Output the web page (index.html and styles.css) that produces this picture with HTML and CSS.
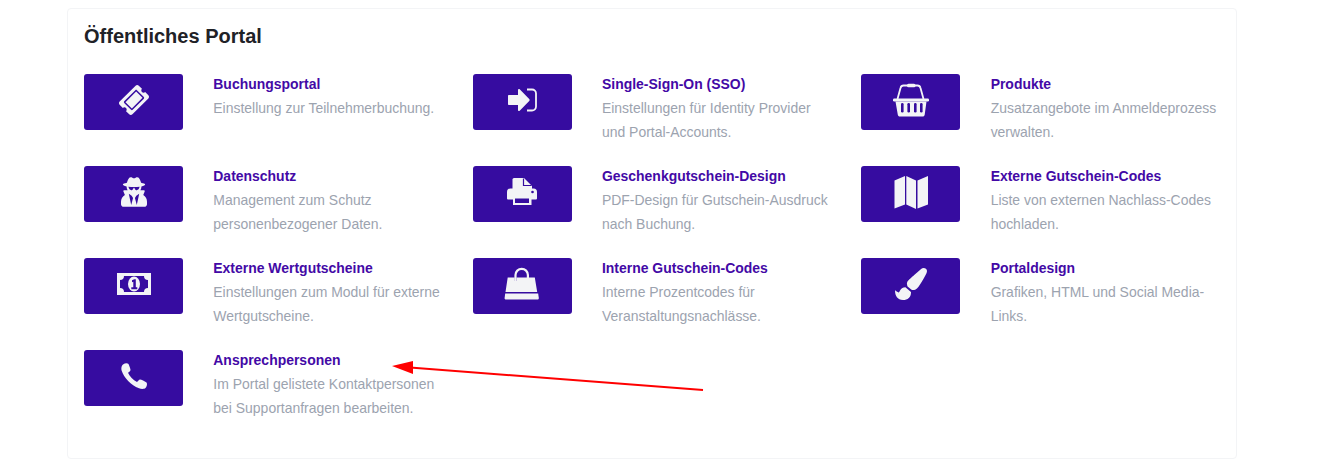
FILE: index.html
```html
<!DOCTYPE html>
<html lang="de">
<head>
    <meta charset="utf-8" />
    <meta name="viewport" content="width=device-width, initial-scale=1" />
    <title>Öffentliches Portal</title>
    <link rel="stylesheet" href="styles.css">
</head>
<body>
    <div class="page">
        <section class="portal-card">
            <h2 class="portal-title">Öffentliches Portal</h2>

            <div class="tile-grid">
                <a class="tile">
                    <div class="tile-icon">
                        <svg width="40" height="40" viewBox="0 0 40 40"><g transform="translate(20 20) rotate(-45) scale(0.047) translate(-288 -256)"><path d="M128 160h320v192H128V160zm400 96c0 26.51 21.49 48 48 48v96c0 26.51-21.49 48-48 48H48c-26.51 0-48-21.49-48-48v-96c26.51 0 48-21.49 48-48s-21.49-48-48-48v-96c0-26.51 21.49-48 48-48h480c26.51 0 48 21.49 48 48v96c-26.51 0-48 21.49-48 48zm-48-104c0-13.255-10.745-24-24-24H120c-13.255 0-24 10.745-24 24v208c0 13.255 10.745 24 24 24h336c13.255 0 24-10.745 24-24V152z"/></g></svg>
                    </div>
                    <div class="tile-text">
                        <h3>Buchungsportal</h3>
                        <p>Einstellung zur Teilnehmerbuchung.</p>
                    </div>
                </a>

                <a class="tile">
                    <div class="tile-icon">
                        <svg width="40" height="40" viewBox="0 0 40 40"><path d="M7 15h9V10c0-1 1-1.400 1.700-.8L27.200 19c.6.6.6 1.400 0 2l-9.500 9.800c-.7.600-1.700.2-1.700-.8v-5H7c-.6 0-1-.4-1-1v-8c0-.6.4-1 1-1z"/><path class="line" d="M25 9.500h5a4 4 0 0 1 4 4v13a4 4 0 0 1-4 4h-5"/></svg>
                    </div>
                    <div class="tile-text">
                        <h3>Single-Sign-On (SSO)</h3>
                        <p>Einstellungen für Identity Provider und Portal-Accounts.</p>
                    </div>
                </a>

                <a class="tile">
                    <div class="tile-icon">
                        <svg width="40" height="40" viewBox="0 0 40 40"><path class="line" d="M6.500 19L9.500 8q.6-2.500 3-2.500h14q2.400 0 3 2.500l3 11"/><rect x="16" y="3.800" width="8.500" height="3.400" rx="1.500"/><rect x="2" y="18.500" width="36" height="3" rx="1.200"/><path d="M4.500 21.500h31l-1.800 13.200c-.2 1.200-1 1.800-2 1.800H8.800c-1 0-1.800-.6-2-1.800z"/><g class="slots"><rect x="10" y="23" width="2.600" height="9.500" rx="1.200"/><rect x="16.400" y="23" width="2.600" height="9.500" rx="1.200"/><rect x="23" y="23" width="2.600" height="9.500" rx="1.200"/><rect x="29" y="23" width="2.600" height="9.500" rx="1.200"/></g></svg>
                    </div>
                    <div class="tile-text">
                        <h3>Produkte</h3>
                        <p>Zusatzangebote im Anmeldeprozess verwalten.</p>
                    </div>
                </a>

                <a class="tile">
                    <div class="tile-icon">
                        <svg width="26" height="30" viewBox="0 0 448 512"><path d="M383.9 308.3l23.9-62.6c4-10.5-3.7-21.7-15-21.7h-58.5c11-18.9 17.8-40.6 17.8-64v-.3c39.2-7.8 64-19.1 64-31.7 0-13.3-27.3-25.1-70.1-33-9.2-32.8-27-65.8-40.6-82.8-9.5-11.9-25.9-15.6-39.5-8.8l-27.6 13.8c-9 4.5-19.6 4.5-28.6 0L182.1 3.4c-13.6-6.8-30-3.1-39.5 8.8-13.5 17-31.4 50-40.6 82.8-42.7 7.9-70 19.7-70 33 0 12.6 24.8 23.9 64 31.7v.3c0 23.4 6.8 45.1 17.8 64H56.3c-11.5 0-19.2 11.7-14.7 22.3l25.8 60.2C27.3 329.8 0 372.7 0 422.4v44.8C0 491.9 20.1 512 44.8 512h358.4c24.7 0 44.8-20.1 44.8-44.8v-44.8c0-48.4-25.8-90.4-64.1-114.1zM176 480l-41.6-192 49.6 32 24 40-32 120zm96 0l-32-120 24-40 49.6-32L272 480zm41.7-298.5c-3.9 11.9-7 24.6-16.5 33.4-10.1 9.3-48 22.4-64-25-2.8-8.4-15.4-8.4-18.3 0-17 50.2-56 32.4-64 25-9.5-8.8-12.7-21.5-16.5-33.4-.8-2.5-6.3-5.7-6.3-5.8v-10.8c28.3 3.6 61 5.8 96 5.8s67.7-2.1 96-5.8v10.8c-.1.1-5.6 3.2-6.4 5.8z"/></svg>
                    </div>
                    <div class="tile-text">
                        <h3>Datenschutz</h3>
                        <p>Management zum Schutz personenbezogener Daten.</p>
                    </div>
                </a>

                <a class="tile">
                    <div class="tile-icon">
                        <svg width="30" height="27" viewBox="0 0 30 27"><path d="M7 0h10l8 8v5H5.500V1.500Q5.500 0 7 0z"/><path class="fold" d="M16.500 .5V7.500H24.500"/><path d="M3.500 10.500h23q3.500 0 3.500 3.500v6.500q0 1-1 1h-4.500V27H6v-5.500H1q-1 0-1-1V14q0-3.500 3.500-3.500z"/><rect class="slots" x="8" y="20.500" width="14" height="4.500"/><circle class="slots" cx="25.500" cy="14" r="1.300"/></svg>
                    </div>
                    <div class="tile-text">
                        <h3>Geschenkgutschein-Design</h3>
                        <p>PDF-Design für Gutschein-Ausdruck nach Buchung.</p>
                    </div>
                </a>

                <a class="tile">
                    <div class="tile-icon">
                        <svg width="40" height="40" viewBox="0 0 40 40"><path d="M3.500 8.500L14 4v28.500L3.500 36.500z"/><path d="M15.300 4L25 8.500v28.500L15.300 32.500z"/><path d="M26.500 8.500L37 4v28.500L26.500 36.500z"/></svg>
                    </div>
                    <div class="tile-text">
                        <h3>Externe Gutschein-Codes</h3>
                        <p>Liste von externen Nachlass-Codes hochladen.</p>
                    </div>
                </a>

                <a class="tile">
                    <div class="tile-icon">
                        <svg width="34" height="22" viewBox="0 0 34 22"><path fill-rule="evenodd" d="M0 0h34v22H0zM7 3q0 4-4 4v8q4 0 4 4h20q0-4 4-4V7q-4 0-4-4z"/><ellipse cx="17" cy="11" rx="6" ry="7.500"/><path class="slots" d="M15 7.200l2.300-1h1.500v8h1.500v2h-6v-2h2v-5.500l-1.300.5z"/></svg>
                    </div>
                    <div class="tile-text">
                        <h3>Externe Wertgutscheine</h3>
                        <p>Einstellungen zum Modul für externe Wertgutscheine.</p>
                    </div>
                </a>

                <a class="tile">
                    <div class="tile-icon">
                        <svg width="40" height="40" viewBox="0 0 40 40"><path class="line thick" d="M13.500 18V11a6.200 6.200 0 0 1 12.400 0v7"/><path d="M5.700 13.500h7v3.500h1.800v-3.500h10.500v3.500h1.800v-3.500h6l2.400 14.500H3.500z"/><path d="M3.200 29.500h33l.6 4.500c.1 1-.5 1.500-1.400 1.500H4c-.9 0-1.500-.5-1.400-1.500z"/></svg>
                    </div>
                    <div class="tile-text">
                        <h3>Interne Gutschein-Codes</h3>
                        <p>Interne Prozentcodes für Veranstaltungsnachlässe.</p>
                    </div>
                </a>

                <a class="tile">
                    <div class="tile-icon">
                        <svg width="32" height="32" viewBox="0 0 512 512"><path d="M167.02 309.34c-40.12 2.58-76.53 17.86-97.19 72.3-2.35 6.21-8 9.98-14.59 9.98-11.11 0-45.46-27.67-55.25-34.35C0 439.62 37.93 512 128 512c75.86 0 128-43.77 128-120.19 0-3.11-.65-6.08-.97-9.13l-88.01-73.34zM457.89 0c-15.16 0-29.37 6.71-40.21 16.45C213.27 199.05 192 203.34 192 257.09c0 13.7 3.25 26.76 8.73 38.7l63.82 53.18c7.21 1.8 14.64 3.03 22.39 3.03 62.11 0 98.11-45.47 211.16-256.46 7.38-14.35 13.9-29.85 13.9-45.99C512 20.64 486 0 457.89 0z"/></svg>
                    </div>
                    <div class="tile-text">
                        <h3>Portaldesign</h3>
                        <p>Grafiken, HTML und Social Media-Links.</p>
                    </div>
                </a>

                <a class="tile">
                    <div class="tile-icon">
                        <svg width="26" height="26" viewBox="0 0 26 26"><path d="M2 1.500C4 0 6.500 0 7.500 1c1 2 2 5 2 6 0 1-1.500 2-2.500 2.800C8.800 13.500 12 17 16 19c1-1 2-2.500 3-2.500 1.500 0 4.500 1.500 6.500 3 1 1.500.3 4-1 5.500-1.500 1.300-4.500 1-6.500.3C10 22 3 15 .6 7.500 0 5 .5 3 2 1.500z"/></svg>
                    </div>
                    <div class="tile-text">
                        <h3>Ansprechpersonen</h3>
                        <p>Im Portal gelistete Kontaktpersonen bei Supportanfragen bearbeiten.</p>
                    </div>
                </a>
            </div>
        </section>

        <!-- red annotation arrow drawn over the screenshot -->
        <svg class="annotation" width="1327" height="476" viewBox="0 0 1327 476">
            <line x1="703" y1="390" x2="410" y2="367.5" stroke="#ff0000" stroke-width="2" />
            <polygon points="392,366 413,361 413,374" fill="#ff0000" />
        </svg>
    </div>
</body>
</html>
```

FILE: styles.css
```css
body {
    margin: 0;
    font-family: "Liberation Sans", Arial, sans-serif;
    background: #fff;
    overflow: hidden;
}

.page {
    position: relative;
    height: 476px;
    padding: 8px 90px 0 67px;
}

.portal-card {
    background: #fff;
    border: 1px solid #f3f4f6;
    border-radius: 4px;
    padding: 13px 16px 38px;
}

.portal-title {
    margin: 0 0 22px;
    font-size: 20px;
    line-height: 28px;
    font-weight: 700;
    color: #1f2227;
}

.tile-grid {
    display: grid;
    grid-template-columns: repeat(3, 1fr);
    column-gap: 30px;
    row-gap: 20px;
}

.tile {
    display: flex;
    gap: 30.3px;
    min-height: 72px;
}

.tile-icon {
    flex: 0 0 99px;
    box-sizing: border-box;
    height: 56px;
    margin-top: 2px;
    padding-bottom: 5px;
    display: flex;
    align-items: center;
    justify-content: center;
    background: #360ca0;
    border-radius: 3px;
}

.tile-icon svg {
    fill: #f3f4f6;
}

.tile-icon .line {
    fill: none;
    stroke: #f3f4f6;
    stroke-width: 1.8;
}

.tile-icon .thick {
    stroke-width: 2.2;
}

.tile-icon .fold {
    fill: none;
    stroke: #360ca0;
    stroke-width: 1.2;
}

.tile-icon .slots {
    fill: #360ca0;
}

.tile-text {
    flex: 1;
    font-size: 13.96px;
    line-height: 24px;
}

.tile-text h3 {
    margin: 0;
    font-size: 13.96px;
    line-height: 24px;
    font-weight: 700;
    color: #4309a6;
}

.tile-text p {
    margin: 0;
    color: #9ca3af;
}

.annotation {
    position: absolute;
    top: 0;
    left: 0;
    pointer-events: none;
}
```
